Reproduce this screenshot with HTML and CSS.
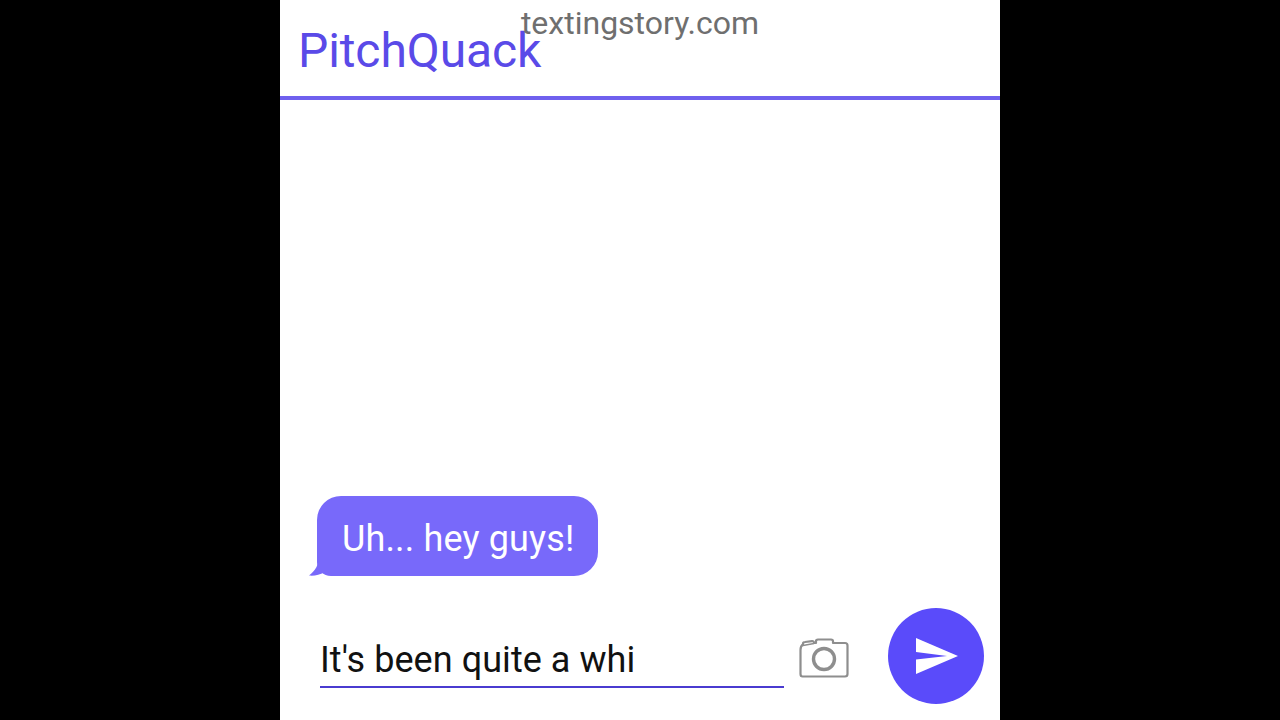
FILE: index.html
```html
<!DOCTYPE html>
<html lang="en">
<head>
    <meta charset="UTF-8">
    <meta name="viewport" content="width=device-width, initial-scale=1.0">
    <title>PitchQuack</title>
    <link rel="stylesheet" href="styles.css">
</head>
<body>
    <div class="phone">
        <div class="watermark">textingstory.com</div>
        <div class="header">
            <div class="title">PitchQuack</div>
        </div>
        <div class="messages">
            <div class="bubble">
                <svg class="tail" width="24" height="20" viewBox="0 0 24 20">
                    <path d="M10 0 C10 9 6 15 0 19.5 C5 20 11 19 15 16.5 L24 20 L24 0 Z" fill="#7869fa"/>
                </svg>
                Uh... hey guys!
            </div>
        </div>
        <div class="composer">
            <div class="input-line">It's been quite a whi</div>
            <svg class="camera" width="50" height="40" viewBox="0 0 50 40">
                <path d="M1.5 12 Q1.5 8 4 6.5 L4 5.5 Q4 4 6 4 L13 3.2 Q15 3 15 5 L17 5 L17 3 Q17 1.5 19 1.5 L32 1.5 Q34 1.5 34 3 L34 5 L46 5 Q48.5 5 48.5 7.5 L48.5 36 Q48.5 38.5 46 38.5 L3.5 38.5 Q1.5 38.5 1.5 36 Z" fill="none" stroke="#8e8e8e" stroke-width="2.2" stroke-linejoin="round"/>
                <path d="M4 7.5 L15 5.4" fill="none" stroke="#8e8e8e" stroke-width="1.5"/>
                <circle cx="25" cy="21" r="10.5" fill="none" stroke="#8e8e8e" stroke-width="3.4"/>
            </svg>
            <div class="send">
                <svg width="42" height="36" viewBox="0 0 42 36">
                    <path d="M0 0 L42 18 L0 36 L0 21.5 L31 18 L0 14 Z" fill="#ffffff"/>
                </svg>
            </div>
        </div>
    </div>
</body>
</html>
```

FILE: styles.css
```css
html, body {
    height: 100%;
}
body {
    margin: 0;
    background-color: #000000;
    display: flex;
    justify-content: center;
    font-family: Roboto, "Liberation Sans", sans-serif;
    overflow: hidden;
}
.phone {
    width: 720px;
    height: 720px;
    background-color: #ffffff;
    display: flex;
    flex-direction: column;
    position: relative;
}
.watermark {
    position: absolute;
    top: 5px;
    left: 0;
    right: 0;
    text-align: center;
    font-size: 32px;
    line-height: 37px;
    color: #6f6f6f;
}
.header {
    height: 96px;
    border-bottom: 4px solid #6f60ee;
    padding-left: 18px;
    display: flex;
    align-items: center;
}
.title {
    font-size: 48px;
    line-height: 56px;
    letter-spacing: -0.1px;
    color: #5a4ae8;
    padding-top: 6px;
}
.messages {
    flex: 1;
    display: flex;
    flex-direction: column;
    justify-content: flex-end;
    align-items: flex-start;
    padding-left: 37px;
    padding-bottom: 32px;
}
.bubble {
    position: relative;
    height: 80px;
    line-height: 86px;
    padding: 0 24px 0 25px;
    background-color: #7869fa;
    border-radius: 24px;
    border-bottom-left-radius: 14px;
    color: #ffffff;
    font-size: 36px;
    letter-spacing: 0.15px;
}
.tail {
    position: absolute;
    left: -8px;
    bottom: 0;
}
.composer {
    height: 112px;
    display: flex;
    align-items: flex-start;
    padding-left: 40px;
}
.input-line {
    width: 464px;
    height: 80px;
    box-sizing: border-box;
    border-bottom: 2px solid #4a3bd0;
    font-size: 36px;
    line-height: 104px;
    letter-spacing: 0.05px;
    color: #111111;
    white-space: nowrap;
}
.camera {
    margin-left: 15px;
    margin-top: 30px;
}
.send {
    width: 96px;
    height: 96px;
    box-sizing: border-box;
    padding-left: 2px;
    border-radius: 50%;
    background-color: #5a4bfa;
    margin-left: 39px;
    display: flex;
    align-items: center;
    justify-content: center;
}
```
